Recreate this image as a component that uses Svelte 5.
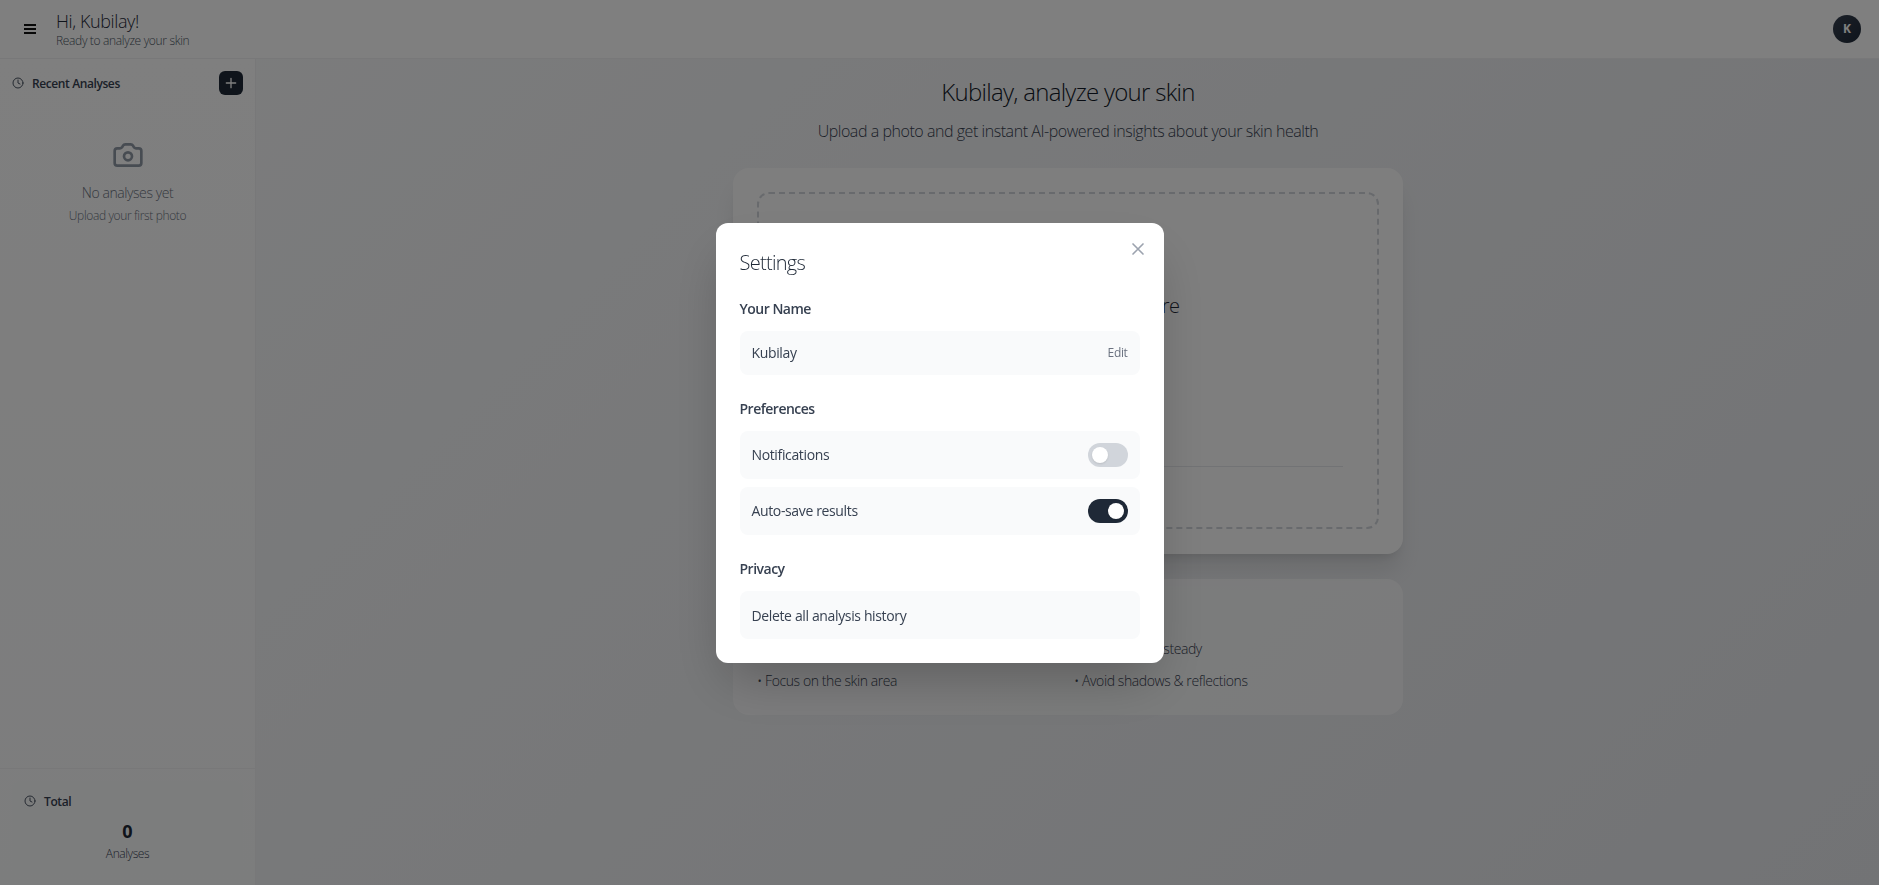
<script>
  const preferences = [
    { label: 'Notifications', on: false },
    { label: 'Auto-save results', on: true }
  ];
  const tips = ['Keep camera steady', 'Focus on the skin area', 'Avoid shadows & reflections'];
</script>

{#snippet clock()}
  <svg class="clock" viewBox="0 0 24 24"><circle cx="12" cy="12" r="10" /><path d="M12 6v6l4 2" /></svg>
{/snippet}

<div class="app">
  <header>
    <svg class="menu" viewBox="0 0 12 11"><path d="M0 1h12M0 5h12M0 9h12" /></svg>
    <div class="hello">
      <div class="hi">Hi, Kubilay!</div>
      <div class="ready">Ready to analyze your skin</div>
    </div>
    <div class="avatar">K</div>
  </header>
  <div class="body">
    <aside>
      <div class="recent">
        {@render clock()}
        <span class="label">Recent Analyses</span>
        <button class="add" aria-label="New analysis"><svg viewBox="0 0 24 24"><path d="M5 12h14M12 5v14" /></svg></button>
      </div>
      <div class="empty">
        <svg viewBox="0 0 24 24"><path d="M13.997 4a2 2 0 0 1 1.76 1.05l.486.9A2 2 0 0 0 18.003 7H20a2 2 0 0 1 2 2v9a2 2 0 0 1-2 2H4a2 2 0 0 1-2-2V9a2 2 0 0 1 2-2h1.997a2 2 0 0 0 1.759-1.048l.489-.904A2 2 0 0 1 10.004 4z" /><circle cx="12" cy="13" r="3" /></svg>
        <div class="none">No analyses yet</div>
        <div class="first">Upload your first photo</div>
      </div>
      <div class="foot">
        <div class="stats">
          <div class="total">{@render clock()}<span class="label">Total</span></div>
          <div class="count">0</div>
          <div class="unit">Analyses</div>
        </div>
      </div>
    </aside>
    <main>
      <h1>Kubilay, analyze your skin</h1>
      <p class="lead">Upload a photo and get instant AI-powered insights about your skin health</p>
      <section class="card">
        <div class="drop">
          <div class="drop-title">Drop your skin photo here</div>
          <div class="rule"></div>
        </div>
      </section>
      <section class="tips">
        <div class="grid">
          <div></div>
          {#each tips as tip}<div>• {tip}</div>{/each}
        </div>
      </section>
    </main>
  </div>
</div>

<div class="overlay">
  <div class="modal">
    <button class="close" aria-label="Close"><svg viewBox="0 0 24 24"><path d="M18 6L6 18M6 6l12 12" /></svg></button>
    <h2>Settings</h2>
    <h4>Your Name</h4>
    <div class="row name"><span>Kubilay</span><span class="edit">Edit</span></div>
    <h4>Preferences</h4>
    <div class="prefs">
      {#each preferences as p}
        <div class="row"><span>{p.label}</span><span class="toggle" class:on={p.on}><i></i></span></div>
      {/each}
    </div>
    <h4>Privacy</h4>
    <div class="row delete"><span>Delete all analysis history</span></div>
  </div>
</div>

<style>
  :global(body) { margin: 0; overflow: hidden; }
  :global(*) { box-sizing: border-box; }
  .app, .overlay { font-family: "Open Sans", "Noto Sans", sans-serif; white-space: nowrap; letter-spacing: -0.36px; }
  .app { height: 885px; display: flex; flex-direction: column; background: linear-gradient(135deg, #f9fafb, #e5e7eb); color: #374151; font-weight: 300; }
  h1, h2, h4, p { margin: 0; }
  button { border: 0; padding: 0; background: none; }
  svg { display: block; fill: none; stroke: currentColor; stroke-width: 2; stroke-linecap: round; stroke-linejoin: round; flex: none; }

  header { height: 59px; flex: none; display: flex; align-items: center; padding: 0 18px 0 24px; background: #fefefe; border-bottom: 1px solid #f0f1f3; }
  .menu { width: 12px; height: 11px; color: #111; stroke-linecap: butt; }
  .hello { margin-left: 20px; }
  .hi { font-size: 18px; line-height: 22px; color: #1f2937; letter-spacing: -0.4px; }
  .ready { padding-top: 1px; font-size: 12px; line-height: 16px; color: #4b5563; letter-spacing: -0.33px; }
  .avatar { margin-left: auto; width: 28px; height: 28px; border-radius: 50%; background: linear-gradient(135deg, #374151, #1f2937); color: #fff; font-size: 12px; font-weight: 700; line-height: 28px; text-align: center; letter-spacing: 0; }

  .body { flex: 1; display: flex; min-height: 0; }
  aside { width: 256px; flex: none; display: flex; flex-direction: column; background: linear-gradient(180deg, #fefefe, #f9fafb); border-right: 1px solid #f0f1f3; }
  .recent { display: flex; align-items: center; height: 48px; padding: 0 12px; }
  .clock { width: 12px; height: 12px; color: #4b5563; }
  .label { margin-left: 8px; padding-top: 2px; font-size: 12px; font-weight: 600; line-height: 16px; letter-spacing: -0.4px; }
  .add { margin-left: auto; width: 24px; height: 24px; border-radius: 6px; background: #1f2937; color: #fff; display: grid; place-items: center; }
  .add svg { width: 16px; height: 16px; }
  .empty { display: flex; flex-direction: column; align-items: center; padding-top: 32px; color: #6b7280; }
  .empty svg { width: 32px; height: 32px; color: #8f98a5; }
  .none { margin-top: 12px; font-size: 14px; line-height: 20px; letter-spacing: -0.42px; }
  .first { margin-top: 5px; font-size: 12px; line-height: 16px; }
  .foot { margin-top: auto; border-top: 1px solid #f0f1f3; padding: 12px; }
  .stats { background: #f9fafb; border-radius: 8px; padding: 12px; height: 92px; }
  .total { display: flex; align-items: center; height: 16px; }
  .count { margin-top: 8px; font-size: 18px; line-height: 28px; font-weight: 700; color: #1f2937; text-align: center; letter-spacing: 0; }
  .unit { padding-top: 1px; font-size: 12px; line-height: 16px; text-align: center; letter-spacing: -0.42px; }

  main { flex: 1; display: flex; flex-direction: column; align-items: center; padding: 17px 0 0 1px; }
  h1 { font-size: 24px; line-height: 32px; font-weight: 300; color: #111827; letter-spacing: -0.72px; }
  .lead { margin-top: 11px; font-size: 16px; line-height: 24px; color: #374151; letter-spacing: -0.45px; }
  .card { margin-top: 25px; width: 670px; height: 386px; padding: 24px; border-radius: 16px; background: #fdfdfd; box-shadow: 0 20px 25px -5px rgba(0,0,0,.1), 0 8px 10px -6px rgba(0,0,0,.1); }
  .drop { height: 337px; border: 2px dashed #d1d5db; border-radius: 12px; padding: 98px 34px 0; }
  .drop-title { font-size: 20px; line-height: 28px; color: #1f2937; text-align: center; letter-spacing: -0.6px; }
  .rule { margin-top: 146px; height: 1px; background: #e5e7eb; }
  .tips { margin-top: 25px; width: 670px; height: 136px; border-radius: 16px; padding: 60px 24px 24px; background: rgba(255,255,255,.6); }
  .grid { display: grid; grid-template-columns: 1fr 1fr; gap: 12px; font-size: 14px; line-height: 20px; letter-spacing: -0.41px; }

  .overlay { position: fixed; inset: 0; display: grid; place-items: center; background: rgba(0,0,0,.5); color: #374151; }
  .modal { position: relative; width: 448px; height: 440px; padding: 24px; border-radius: 12px; background: #fff; box-shadow: 0 25px 50px -12px rgba(0,0,0,.25); }
  .close { position: absolute; top: 16px; right: 16px; color: #9ca3af; }
  .close svg { width: 20px; height: 20px; }
  h2 { padding-top: 2px; height: 28px; font-size: 20px; line-height: 28px; font-weight: 300; color: #1f2937; margin-bottom: 24px; letter-spacing: -0.72px; }
  h4 { font-size: 14px; line-height: 20px; font-weight: 600; margin-bottom: 12px; letter-spacing: -0.5px; }
  .row { display: flex; align-items: center; justify-content: space-between; height: 48px; padding: 0 12px; border-radius: 8px; background: #f9fafb; font-size: 14px; line-height: 20px; }
  .row.name { height: 44px; margin-bottom: 24px; }
  .row.delete { padding-top: 2px; }
  .edit { padding-top: 1px; font-size: 12px; color: #6b7280; }
  .prefs { display: flex; flex-direction: column; gap: 8px; margin-bottom: 24px; }
  .toggle { width: 40px; height: 24px; border-radius: 12px; background: #d1d5db; padding: 4px; display: flex; }
  .toggle.on { background: #1f2937; justify-content: flex-end; }
  .toggle i { width: 16px; height: 16px; border-radius: 50%; background: #fff; box-shadow: 0 1px 2px rgba(0,0,0,.1); }
</style>
